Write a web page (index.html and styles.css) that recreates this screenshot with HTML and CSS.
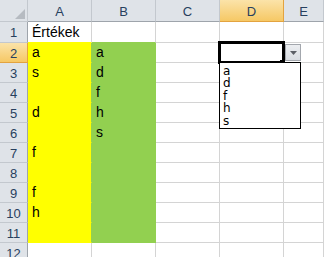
FILE: index.html
```html
<!DOCTYPE html>
<html>
<head>
<title>Értékek</title>
<meta charset="UTF-8">
<link rel="stylesheet" href="styles.css">
</head>
<body>

<div class="wrap">
<div class="sheet">
  <div class="hdr corner"><svg width="10" height="10" viewBox="0 0 10 10"><polygon points="10,0 10,10 0,10" fill="#b6bbc1"/></svg></div>
  <div class="hdr col">A</div>
  <div class="hdr col">B</div>
  <div class="hdr col">C</div>
  <div class="hdr col sel">D</div>
  <div class="hdr col">E</div>

  <div class="hdr row">1</div>
  <div class="cell toyel">Értékek</div>
  <div class="cell togrn"></div>
  <div class="cell"></div>
  <div class="cell"></div>
  <div class="cell"></div>

  <div class="hdr row sel">2</div>
  <div class="cell yel">a</div>
  <div class="cell grn">a</div>
  <div class="cell"></div>
  <div class="cell"></div>
  <div class="cell"></div>

  <div class="hdr row">3</div>
  <div class="cell yel">s</div>
  <div class="cell grn">d</div>
  <div class="cell"></div>
  <div class="cell"></div>
  <div class="cell"></div>

  <div class="hdr row">4</div>
  <div class="cell yel"></div>
  <div class="cell grn">f</div>
  <div class="cell"></div>
  <div class="cell"></div>
  <div class="cell"></div>

  <div class="hdr row">5</div>
  <div class="cell yel">d</div>
  <div class="cell grn">h</div>
  <div class="cell"></div>
  <div class="cell"></div>
  <div class="cell"></div>

  <div class="hdr row">6</div>
  <div class="cell yel"></div>
  <div class="cell grn">s</div>
  <div class="cell"></div>
  <div class="cell"></div>
  <div class="cell"></div>

  <div class="hdr row">7</div>
  <div class="cell yel">f</div>
  <div class="cell grn"></div>
  <div class="cell"></div>
  <div class="cell"></div>
  <div class="cell"></div>

  <div class="hdr row">8</div>
  <div class="cell yel"></div>
  <div class="cell grn"></div>
  <div class="cell"></div>
  <div class="cell"></div>
  <div class="cell"></div>

  <div class="hdr row">9</div>
  <div class="cell yel">f</div>
  <div class="cell grn"></div>
  <div class="cell"></div>
  <div class="cell"></div>
  <div class="cell"></div>

  <div class="hdr row">10</div>
  <div class="cell yel">h</div>
  <div class="cell grn"></div>
  <div class="cell"></div>
  <div class="cell"></div>
  <div class="cell"></div>

  <div class="hdr row">11</div>
  <div class="cell yel"></div>
  <div class="cell grn"></div>
  <div class="cell"></div>
  <div class="cell"></div>
  <div class="cell"></div>

  <div class="hdr row">12</div>
  <div class="cell"></div>
  <div class="cell"></div>
  <div class="cell"></div>
  <div class="cell"></div>
  <div class="cell"></div>
</div>

<!-- active cell D2 with its validation list -->
<div class="selbox"></div>
<div class="handle"></div>
<div class="ddbtn"><svg width="7" height="4" viewBox="0 0 7 4"><polygon points="0,0 7,0 3.5,4" fill="#5b5f66"/></svg></div>
<ul class="ddlist">
  <li>a</li>
  <li>d</li>
  <li>f</li>
  <li>h</li>
  <li>s</li>
</ul>
</div>

</body>
</html>
```

FILE: styles.css
```css
body {
  margin: 0;
  background: #fff;
  font-family: "Liberation Sans", Arial, sans-serif;
}

.wrap {
  position: relative;
  width: 324px;
  height: 257px;
  overflow: hidden;
}

.sheet {
  display: grid;
  grid-template-columns: 28px 64px 64px 64px 64px 1fr;
  grid-template-rows: 22px 21px repeat(11, 20px);
}

.sheet > div {
  box-sizing: border-box;
  border-right: 1px solid #d4d4d4;
  border-bottom: 1px solid #d4d4d4;
}

/* headers */
.hdr {
  background: #dfe3e8;
  color: #27405e;
  font-size: 13px;
  display: flex;
  align-items: center;
  justify-content: center;
}

.sheet > .hdr {
  border-right-color: #c3c8ce;
  border-bottom-color: #c3c8ce;
}

.sheet > .col {
  border-bottom-color: #9ea4ab;
  padding-top: 1px;
}

.sheet > .row {
  border-right-color: #9ea4ab;
  padding-top: 1px;
}

.corner {
  align-items: flex-end;
  justify-content: flex-end;
  padding: 0 2px 2px 0;
}

.corner svg { display: block; }

.sheet > .hdr.sel {
  background: linear-gradient(#fbe3a9, #f6c865);
  border-color: #e3a33f;
}

/* cells */
.cell {
  font-size: 14px;
  color: #000;
  line-height: 16px;
  display: flex;
  align-items: flex-end;
  padding: 0 0 2px 4px;
  background: #fff;
}

.sheet > .yel {
  background: #ffff00;
  border-color: #ffff00;
  border-right-color: #92d050;
}

.sheet > .grn {
  background: #92d050;
  border-color: #92d050;
}

.sheet > .toyel { border-bottom-color: #ffff00; }
.sheet > .togrn { border-bottom-color: #92d050; }

/* overlays on the grid */
.selbox {
  position: absolute;
  left: 218px;
  top: 41px;
  width: 67px;
  height: 23px;
  box-sizing: border-box;
  border: 3px solid #000;
}

.handle {
  position: absolute;
  left: 280px;
  top: 60px;
  width: 5px;
  height: 5px;
  background: #000;
}

.ddbtn {
  position: absolute;
  left: 285px;
  top: 44px;
  width: 16px;
  height: 17px;
  box-sizing: border-box;
  border: 1px solid #a3a7ad;
  background: linear-gradient(#eceef1, #d9dde2);
  display: flex;
  align-items: center;
  justify-content: center;
}

.ddbtn svg { display: block; margin-top: 1px; }

.ddlist {
  position: absolute;
  left: 219px;
  top: 62px;
  width: 82px;
  height: 67px;
  box-sizing: border-box;
  margin: 0;
  padding: 2px 0 0 3px;
  list-style: none;
  background: #fff;
  border: 1px solid #000;
  font-family: "DejaVu Sans", Verdana, sans-serif;
  font-size: 12px;
  line-height: 12.4px;
  color: #000;
}
```
